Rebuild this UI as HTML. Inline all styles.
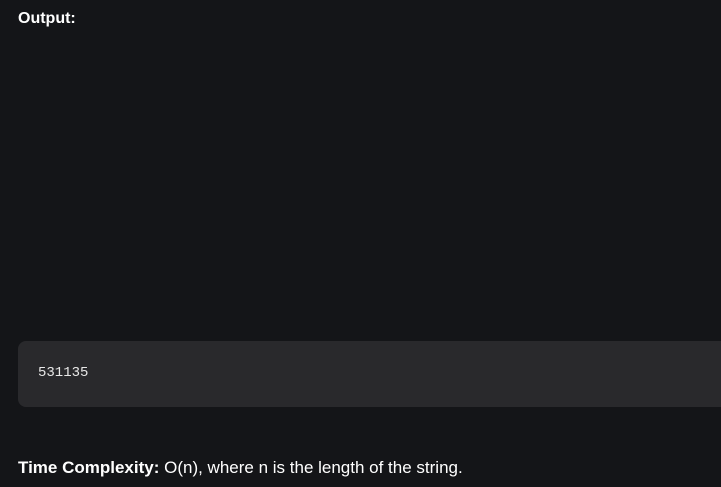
<!DOCTYPE html>
<html><head><style>
html,body{margin:0;padding:0;background:#141518;width:721px;height:487px;overflow:hidden;font-family:"Liberation Sans",sans-serif;color:#fff}
.t{position:absolute;left:18px;white-space:nowrap;line-height:20px}
.box{position:absolute;left:18px;top:341px;width:720px;height:66px;background:#29292c;border-radius:8px}
.code{position:absolute;left:38px;top:365px;font-family:"Liberation Mono",monospace;font-size:14px;line-height:16px;color:#e8e8e8}
</style></head><body>
<div class="t" style="top:9px;font-size:16px;font-weight:bold">Output:</div>
<div class="box"></div>
<div class="code">531135</div>
<div class="t" style="top:458px;font-size:17px"><b>Time Complexity:</b> O(n), where n is the length of the string.</div>
</body></html>
